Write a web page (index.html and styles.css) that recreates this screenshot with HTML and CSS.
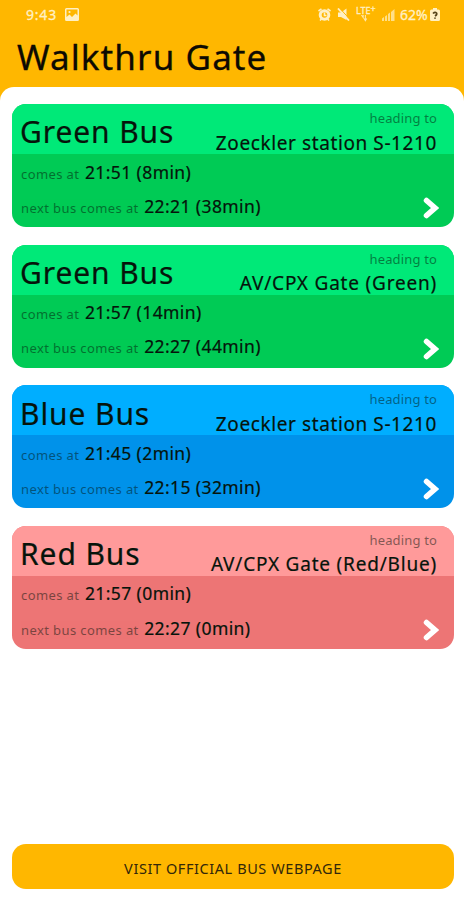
FILE: index.html
```
<!DOCTYPE html>
<html lang="en">

<head>
    <meta charset="UTF-8">
    <meta name="viewport" content="width=device-width, initial-scale=1.0">
    <title>Walkthru Gate</title>
    <link rel="stylesheet" href="styles.css">
</head>

<body>
    <header class="header">
        <div class="status">
            <span class="clock">9:43</span>
            <svg class="picture" width="14" height="13" viewBox="0 0 14 13">
                <path fill="#fff0c4" fill-rule="evenodd" d="M1.500 0h11Q14 0 14 1.500v10Q14 13 12.500 13h-11Q0 13 0 11.500v-10Q0 0 1.500 0zM1.500 1.500V9L4.500 6.500 7 9l3.500-3.500 2 2V1.500z" />
                <circle cx="4.500" cy="4" r="1.100" fill="#fff0c4" />
            </svg>
            <div class="status-right">
                <svg width="13" height="13" viewBox="0 0 13 13">
                    <circle cx="6.500" cy="7" r="4.300" fill="none" stroke="#fff0c4" stroke-width="3" />
                    <path d="M0.500 3L3.500 0.800M12.500 3L9.500 0.800M2 12.500l1.500-1.500M11 12.500l-1.500-1.500M6.500 4.500V7.500H8.500" fill="none" stroke="#fff0c4" stroke-width="1.600" />
                </svg>
                <svg class="mute" width="13" height="13" viewBox="0 0 13 13">
                    <path d="M1 4.500h3L9.500 0.500v11.500L4 9H1z" fill="#fff0c4" />
                    <path d="M2.500 0l11 12" stroke="#ffb700" stroke-width="1" />
                    <path d="M1 0.500l11 12" stroke="#fff0c4" stroke-width="1.800" />
                </svg>
                <div class="lte">
                    <span>LTE<sup>+</sup></span>
                    <svg width="11" height="8" viewBox="0 0 11 8">
                        <path d="M2 0l2 3V0M6.500 0v6.500M5 4l1.500 2.500L8 4" fill="none" stroke="#ffe9ad" stroke-width="1.200" />
                    </svg>
                </div>
                <svg class="signal" width="13" height="12" viewBox="0 0 13 12">
                    <path d="M0 12v-2.500L2 8v4zM3 12V7.500L5 6v6zM6 12V5l2-1.500V12zM9 12V3l3.500-3v12z" fill="#ffdf88" />
                </svg>
                <span class="percent">62%</span>
                <svg class="battery" width="10" height="13" viewBox="0 0 10 13">
                    <path d="M3 0h4v1.500h1.500Q10 1.500 10 3v8.500Q10 13 8.500 13h-7Q0 13 0 11.500V3Q0 1.500 1.500 1.500H3z" fill="#fff0c4" />
                    <path d="M3 5.500Q5 3.500 6.500 5 7.500 6.500 5 8M5 9.500v1.200" fill="none" stroke="#55431a" stroke-width="1.700" />
                </svg>
            </div>
        </div>
        <h1 class="title">Walkthru Gate</h1>
    </header>

    <main class="panel">
        <div class="card green">
            <div class="card-top">
                <h2 class="bus">Green Bus</h2>
                <div class="heading">
                    <p class="small to">heading to</p>
                    <p class="dest">Zoeckler station S-1210</p>
                </div>
            </div>
            <div class="card-bottom">
                <div>
                    <p class="row"><span class="small">comes at</span><span class="time">21:51 (8min)</span></p>
                    <p class="row"><span class="small">next bus comes at</span><span class="time">22:21 (38min)</span></p>
                </div>
                <svg class="arrow" width="16" height="22" viewBox="0 0 16 22"><path d="M3.500 3.500L12 11 3.500 18.500" /></svg>
            </div>
        </div>

        <div class="card green">
            <div class="card-top">
                <h2 class="bus">Green Bus</h2>
                <div class="heading">
                    <p class="small to">heading to</p>
                    <p class="dest gate">AV/CPX Gate (Green)</p>
                </div>
            </div>
            <div class="card-bottom">
                <div>
                    <p class="row"><span class="small">comes at</span><span class="time">21:57 (14min)</span></p>
                    <p class="row"><span class="small">next bus comes at</span><span class="time">22:27 (44min)</span></p>
                </div>
                <svg class="arrow" width="16" height="22" viewBox="0 0 16 22"><path d="M3.500 3.500L12 11 3.500 18.500" /></svg>
            </div>
        </div>

        <div class="card blue">
            <div class="card-top">
                <h2 class="bus">Blue Bus</h2>
                <div class="heading">
                    <p class="small to">heading to</p>
                    <p class="dest">Zoeckler station S-1210</p>
                </div>
            </div>
            <div class="card-bottom">
                <div>
                    <p class="row"><span class="small">comes at</span><span class="time">21:45 (2min)</span></p>
                    <p class="row"><span class="small">next bus comes at</span><span class="time">22:15 (32min)</span></p>
                </div>
                <svg class="arrow" width="16" height="22" viewBox="0 0 16 22"><path d="M3.500 3.500L12 11 3.500 18.500" /></svg>
            </div>
        </div>

        <div class="card red">
            <div class="card-top">
                <h2 class="bus">Red Bus</h2>
                <div class="heading">
                    <p class="small to">heading to</p>
                    <p class="dest gate">AV/CPX Gate (Red/Blue)</p>
                </div>
            </div>
            <div class="card-bottom">
                <div>
                    <p class="row"><span class="small">comes at</span><span class="time">21:57 (0min)</span></p>
                    <p class="row"><span class="small">next bus comes at</span><span class="time">22:27 (0min)</span></p>
                </div>
                <svg class="arrow" width="16" height="22" viewBox="0 0 16 22"><path d="M3.500 3.500L12 11 3.500 18.500" /></svg>
            </div>
        </div>

        <a href="#" class="visit"><span>VISIT OFFICIAL BUS WEBPAGE</span></a>
    </main>
</body>

</html>
```
FILE: styles.css
```
* {
    box-sizing: border-box;
}

body,
h1,
h2,
p {
    margin: 0;
    padding: 0;
    font-weight: 400;
}

body {
    display: flex;
    flex-direction: column;
    height: 900px;
    background-color: #ffb700;
    color: #06140b;
    font-family: "Noto Sans", sans-serif;
    white-space: nowrap;
    overflow: hidden;
}

.header {
    height: 87px;
}

/* status bar */

.status {
    display: flex;
    align-items: center;
    height: 36px;
    padding: 0 24px 7px 26px;
    color: #fff0c4;
    font-size: 14px;
    line-height: 20px;
    -webkit-text-stroke: 0.3px #fff0c4;
}

.clock {
    width: 39px;
    letter-spacing: 0.8px;
}

.status-right {
    display: flex;
    align-items: center;
    margin-left: auto;
}

.mute {
    margin-left: 6px;
}

.lte {
    display: flex;
    flex-direction: column;
    align-items: flex-start;
    width: 22px;
    height: 15px;
    margin-left: 6px;
    font-size: 9px;
    line-height: 8px;
}

.lte svg {
    margin-left: 3px;
}

.lte sup {
    font-size: 9px;
    line-height: 0;
    vertical-align: 2px;
}

.signal {
    margin-left: 4px;
}

.percent {
    width: 29px;
    margin-left: 5px;
}

.battery {
    margin-left: 1px;
}

.title {
    padding-left: 17px;
    color: #0d0a02;
    font-size: 35px;
    line-height: 42px;
    letter-spacing: 1.1px;
    -webkit-text-stroke: 0.3px #0d0a02;
}

.panel {
    display: flex;
    flex-direction: column;
    gap: 17.3px;
    flex: 1;
    padding: 17px 10px 11px 12px;
    border-radius: 14px 14px 0 0;
    background-color: #fff;
}

/* bus cards */

.card {
    height: 123.3px;
    border-radius: 14px;
    overflow: hidden;
}

.card-top {
    display: flex;
    justify-content: space-between;
    height: 50px;
    padding: 0 17px 0 8px;
}

.card-bottom {
    display: flex;
    justify-content: space-between;
    height: 74px;
    padding: 5.5px 15px 0 9px;
}

.green {
    background-color: #00cb55;
}

.green .card-top {
    background-color: #00e978;
}

.blue {
    background-color: #0092ea;
}

.blue .card-top {
    background-color: #00aeff;
}

.red {
    background-color: #ed7575;
}

.red .card-top {
    background-color: #ff9a9a;
}

.bus {
    padding-top: 10.4px;
    font-size: 30px;
    line-height: 36px;
    letter-spacing: 0.9px;
    -webkit-text-stroke: 0.2px #06140b;
}

.heading {
    padding-top: 4.3px;
    text-align: right;
}

.small {
    font-size: 13px;
    line-height: 20px;
    letter-spacing: 0.4px;
    opacity: 0.5;
}

.to {
    letter-spacing: 0.15px;
}

.dest {
    margin-top: 2.3px;
    font-size: 19px;
    line-height: 24px;
    letter-spacing: 0.6px;
    -webkit-text-stroke: 0.2px #06140b;
}

.gate {
    letter-spacing: 0.8px;
}

.row {
    display: flex;
    align-items: baseline;
    gap: 5.5px;
    height: 24px;
    margin-bottom: 10.4px;
    line-height: 24px;
}

.time {
    font-size: 17.5px;
    line-height: 24px;
    letter-spacing: 0.4px;
    -webkit-text-stroke: 0.2px #06140b;
}

.arrow {
    margin-top: 37.5px;
}

.arrow path {
    fill: none;
    stroke: #fff;
    stroke-width: 5.5;
    stroke-linecap: round;
}

.visit {
    display: flex;
    align-items: center;
    justify-content: center;
    height: 45px;
    padding-top: 2px;
    margin-top: auto;
    border-radius: 14px;
    background-color: #ffb700;
    color: #33270a;
    font-size: 14.5px;
    letter-spacing: 0.58px;
    text-decoration: none;
}
```
